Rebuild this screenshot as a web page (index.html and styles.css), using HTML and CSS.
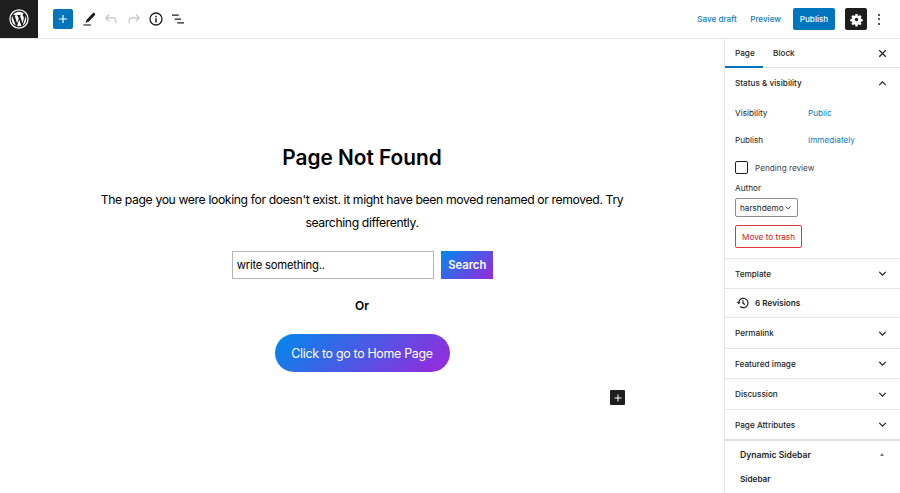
FILE: index.html
```html
<!DOCTYPE html>
<html lang="en">
<head>
<meta charset="utf-8">
<title>Edit Page</title>
<link rel="stylesheet" href="styles.css">
</head>
<body>
<div class="app">
  <header class="topbar">
    <div class="wp-logo">
      <svg viewBox="0 0 28 28" width="24" height="24"><circle cx="14" cy="14" r="10.6" fill="none" stroke="#fff" stroke-width="1.5"/><path fill="#fff" d="M5.4 14c0 3.4 2 6.3 4.8 7.7L6.1 10.5A8.6 8.6 0 0 0 5.4 14Zm14.4-.4c0-1.1-.4-1.8-.7-2.4-.4-.7-.8-1.3-.8-2 0-.8.6-1.5 1.4-1.5h.1A8.6 8.6 0 0 0 7 9.3h.6c.9 0 2.3-.1 2.3-.1.5 0 .5.7 0 .7 0 0-.5.1-1 .1l3 9 1.8-5.5-1.3-3.5c-.5 0-.9-.1-.9-.1-.5 0-.4-.7 0-.7 0 0 1.4.1 2.3.1.9 0 2.3-.1 2.3-.1.5 0 .5.7 0 .7 0 0-.5.1-1 .1l3 8.9.8-2.8c.4-1.1.6-2 .6-2.7Zm-5.6 1.2-2.5 7.3a8.6 8.6 0 0 0 5.3-.1l-.1-.1-2.7-7.1Zm7.3-4.8.1.9c0 .9-.2 1.9-.7 3.1l-2.6 7.6a8.6 8.6 0 0 0 3.2-11.6Z"/></svg>
    </div>
    <div class="tools">
      <button class="add-btn" type="button" aria-label="Add block">
        <svg viewBox="0 0 24 24" width="14" height="14"><path fill="#fff" d="M11 5h2v6h6v2h-6v6h-2v-6H5v-2h6z"/></svg>
      </button>
      <span class="tool"><svg viewBox="0 0 24 24" width="18" height="18"><path fill="#1e1e1e" d="M19.6 4.300c-.9-.8-2-.7-2.700 0l-8 8.600-1.600 4.100 4.200-1.400 8.200-8.500c.7-.8.7-2-.1-2.800Z"/><path fill="#1e1e1e" d="M4.500 19.200h10v1.500h-10z"/></svg></span>
      <span class="tool"><svg viewBox="0 0 24 24" width="18" height="18"><path fill="none" stroke="#c4c4c4" stroke-width="1.500" d="M9.500 6 5 10.500l4.500 4.500M5 10.500h9.500c2.500 0 4 1.700 4 4V18"/></svg></span>
      <span class="tool"><svg viewBox="0 0 24 24" width="18" height="18"><path fill="none" stroke="#c4c4c4" stroke-width="1.500" d="M14.500 6 19 10.500 14.500 15M19 10.500H9.500c-2.500 0-4 1.700-4 4V18"/></svg></span>
      <span class="tool"><svg viewBox="0 0 24 24" width="18" height="18"><circle cx="12" cy="12" r="8" fill="none" stroke="#1e1e1e" stroke-width="1.700"/><path fill="#1e1e1e" d="M11 11h2v5.500h-2zM11 7.500h2v2h-2z"/></svg></span>
      <span class="tool"><svg viewBox="0 0 24 24" width="18" height="18"><path fill="#1e1e1e" d="M4 6h9v1.700H4zM7.500 11.200H16v1.700H7.500zM11 16.400h9v1.700h-9z"/></svg></span>
    </div>
    <div class="actions">
      <a class="link">Save draft</a>
      <a class="link">Preview</a>
      <button class="publish" type="button">Publish</button>
      <button class="settings" type="button" aria-label="Settings">
        <svg viewBox="0 0 24 24" width="15" height="15"><path fill="#fff" fill-rule="evenodd" d="M10.300 3h3.400l.4 2.600 1.500.7 2.200-1.400 2.400 2.400-1.400 2.100.6 1.500 2.600.5v3.200l-2.600.5-.6 1.500 1.400 2.100-2.400 2.400-2.200-1.400-1.500.7-.4 2.600h-3.400l-.4-2.600-1.500-.7-2.200 1.400-2.400-2.400 1.400-2.100-.6-1.500-2.600-.5v-3.200l2.600-.5.600-1.500-1.400-2.100 2.400-2.400 2.200 1.400 1.500-.7ZM12 9.200a2.800 2.800 0 1 0 0 5.600 2.800 2.800 0 0 0 0-5.600Z"/></svg>
      </button>
      <span class="dots"><i></i><i></i><i></i></span>
    </div>
  </header>
  <div class="body">
    <main class="canvas">
      <h1 class="title">Page Not Found</h1>
      <p class="lead">The page you were looking for doesn't exist. it might have been moved renamed or removed. Try searching differently.</p>
      <div class="search">
        <div class="search-input">write something..</div>
        <div class="search-btn">Search</div>
      </div>
      <div class="or">Or</div>
      <div class="home-btn">Click to go to Home Page</div>
      <div class="block-add-row">
        <span class="block-add"><svg viewBox="0 0 24 24" width="12" height="12"><path fill="#fff" d="M11 5h2v6h6v2h-6v6h-2v-6H5v-2h6z"/></svg></span>
      </div>
    </main>
    <aside class="sidebar">
      <div class="tabs">
        <span class="tab active">Page</span>
        <span class="tab">Block</span>
        <svg class="close" viewBox="0 0 24 24" width="13" height="13"><path fill="none" stroke="#1e1e1e" stroke-width="2.200" d="m6 6 12 12M18 6 6 18"/></svg>
      </div>
      <section class="panel status">
        <div class="panel-head"><span>Status &amp; visibility</span>
          <svg class="chev" viewBox="0 0 24 24" width="13" height="13"><path fill="none" stroke="#1e1e1e" stroke-width="2.200" d="m6 15 6-6 6 6"/></svg>
        </div>
        <div class="row row-vis"><span class="row-label">Visibility</span><a class="row-link">Public</a></div>
        <div class="row row-pub"><span class="row-label">Publish</span><a class="row-link">Immediately</a></div>
        <div class="check-row"><span class="checkbox"></span><span>Pending review</span></div>
        <div class="author-label">Author</div>
        <div class="select"><span>harshdemo</span><svg viewBox="0 0 24 24" width="9" height="9"><path fill="none" stroke="#1e1e1e" stroke-width="2.600" d="m5 9 7 7 7-7"/></svg></div>
        <div class="trash">Move to trash</div>
      </section>
      <section class="panel closed h30"><span>Template</span><svg class="chev" viewBox="0 0 24 24" width="13" height="13"><path fill="none" stroke="#1e1e1e" stroke-width="2.200" d="m6 9 6 6 6-6"/></svg></section>
      <section class="panel closed h29">
        <span class="rev"><svg viewBox="0 0 24 24" width="16" height="16"><path fill="none" stroke="#1e1e1e" stroke-width="1.800" d="M5.500 12a7 7 0 1 1 2.300 5.200M12 8v4.500l3 1.800"/><path fill="#1e1e1e" d="m2.500 10.500 3 3.500 3-3.500z"/></svg><span>6 Revisions</span></span>
      </section>
      <section class="panel closed h31"><span>Permalink</span><svg class="chev" viewBox="0 0 24 24" width="13" height="13"><path fill="none" stroke="#1e1e1e" stroke-width="2.200" d="m6 9 6 6 6-6"/></svg></section>
      <section class="panel closed h30"><span>Featured image</span><svg class="chev" viewBox="0 0 24 24" width="13" height="13"><path fill="none" stroke="#1e1e1e" stroke-width="2.200" d="m6 9 6 6 6-6"/></svg></section>
      <section class="panel closed h31"><span>Discussion</span><svg class="chev" viewBox="0 0 24 24" width="13" height="13"><path fill="none" stroke="#1e1e1e" stroke-width="2.200" d="m6 9 6 6 6-6"/></svg></section>
      <section class="panel closed h31 thick"><span>Page Attributes</span><svg class="chev" viewBox="0 0 24 24" width="13" height="13"><path fill="none" stroke="#1e1e1e" stroke-width="2.200" d="m6 9 6 6 6-6"/></svg></section>
      <section class="dyn">
        <div class="dyn-head"><span>Dynamic Sidebar</span><i class="tri"></i></div>
        <div class="dyn-item">Sidebar</div>
      </section>
    </aside>
  </div>
</div>
</body>
</html>
```
FILE: styles.css
```css
* { box-sizing: border-box; }
html, body { margin: 0; height: 100%; overflow: hidden; background: #fff; }
body { font-family: Inter, "Liberation Sans", sans-serif; color: #1e1e1e; }
.app { width: 900px; height: 493px; display: flex; flex-direction: column; }
button { font-family: inherit; border: 0; padding: 0; }

.topbar { height: 39px; flex: none; display: flex; align-items: center; border-bottom: 1px solid #e6e6e6; padding-right: 19px; }
.wp-logo { width: 38px; height: 38px; background: #1e1e1e; display: flex; align-items: center; justify-content: center; }
.tools { display: flex; align-items: center; margin-left: 15px; }
.add-btn { width: 20px; height: 20px; background: #0075bd; border-radius: 2px; display: flex; align-items: center; justify-content: center; margin-right: 5px; }
.tool { width: 22.300px; height: 24px; display: flex; align-items: center; justify-content: center; }
.actions { margin-left: auto; display: flex; align-items: center; }
.link { font-size: 8.100px; font-weight: 500; color: #0a7cbf; margin-right: 13.500px; }
.link + .link { margin-right: 12px; }
.publish { width: 42px; height: 22px; background: #0075bd; color: #fff; font-size: 8.100px; font-weight: 500; border-radius: 2px; margin-right: 10px; }
.settings { width: 22px; height: 22px; background: #1e1e1e; border-radius: 2px; display: flex; align-items: center; justify-content: center; margin-right: 10px; }
.dots { display: flex; flex-direction: column; gap: 2.500px; width: 4px; align-items: center; }
.dots i { width: 2px; height: 2px; background: #1e1e1e; border-radius: 50%; display: block; }

.body { flex: 1; display: flex; min-height: 0; }
.canvas { width: 724px; flex: none; display: flex; flex-direction: column; align-items: center; padding-top: 105px; color: #000; }
.title { margin: 0; font-size: 20.800px; line-height: 27px; font-weight: 600; }
.lead { margin: 17px 0 0; width: 540px; text-align: center; font-size: 12.200px; letter-spacing: -.37px; line-height: 23px; }
.search { display: flex; margin: 17px 0 0 1px; gap: 7.500px; }
.search-input { width: 202px; height: 28px; border: 1px solid #b5b5b5; font-size: 11.300px; letter-spacing: -.25px; line-height: 26px; padding-left: 4px; }
.search-btn { width: 52px; height: 28px; background: linear-gradient(135deg, #0089ec, #9a27dc); color: #fff; font-size: 11.200px; font-weight: 600; line-height: 28px; text-align: center; }
.or { margin-top: 19px; font-size: 12px; font-weight: 600; line-height: 16px; }
.home-btn { margin-top: 20px; width: 175px; height: 38px; border-radius: 19px; background: linear-gradient(135deg, #0089ec, #9a27dc); color: #fff; font-size: 12.400px; letter-spacing: -.3px; line-height: 39px; text-align: center; }
.block-add-row { width: 100%; display: flex; justify-content: flex-end; padding-right: 99px; margin-top: 18px; }
.block-add { width: 15px; height: 15px; background: #1e1e1e; border-radius: 1px; display: flex; align-items: center; justify-content: center; }

.sidebar { width: 176px; flex: none; border-left: 1px solid #e6e6e6; font-size: 8.200px; font-weight: 500; overflow: hidden; }
.tabs { height: 29px; display: flex; align-items: center; border-bottom: 1px solid #e6e6e6; }
.tab { height: 29px; line-height: 28px; padding: 0 10px; }
.tab.active { width: 38px; border-bottom: 2px solid #0075bd; }
.close { margin-left: auto; margin-right: 11px; }
.panel { border-bottom: 1px solid #e6e6e6; }
.status { height: 191px; padding: 0 10px; }
.panel-head { height: 30px; display: flex; align-items: center; justify-content: space-between; }
.chev { margin-right: 1px; }
.row { display: flex; align-items: center; font-weight: 400; height: 12px; }
.row-label { width: 73px; }
.row-link { color: #0a7cbf; }
.row-vis { margin-top: 9px; }
.row-pub { margin-top: 15px; }
.check-row { margin-top: 15px; display: flex; align-items: center; gap: 7px; font-weight: 400; color: #444; }
.checkbox { width: 13px; height: 13px; border: 1px solid #1e1e1e; border-radius: 2px; display: block; }
.author-label { margin-top: 8px; font-weight: 400; line-height: 12px; }
.select { margin-top: 4px; width: 63px; height: 19px; border: 1px solid #8d8d8d; border-radius: 2px; display: flex; align-items: center; justify-content: space-between; padding: 0 5px 0 4px; font-weight: 400; }
.trash { margin-top: 8px; width: 67px; height: 23px; border: 1px solid #d9383c; border-radius: 2px; color: #cc1818; line-height: 22px; text-align: center; font-weight: 400; }
.closed { display: flex; align-items: center; justify-content: space-between; padding: 0 10px; }
.h31 { height: 31px; }
.h30 { height: 30px; }
.h29 { height: 29px; }
.thick { border-bottom: 2px solid #e0e0e0; }
.rev { display: flex; align-items: center; gap: 4px; }
.rev span { font-weight: 600; }
.dyn { padding: 0 15px; }
.dyn-head { height: 27px; display: flex; align-items: center; justify-content: space-between; font-size: 8.650px; font-weight: 600; }
.tri { width: 0; height: 0; border: 2.500px solid transparent; border-bottom: 3.500px solid #777; border-top: 0; margin-right: 1px; }
.dyn-item { margin-top: 5px; line-height: 12px; font-weight: 600; }
```
